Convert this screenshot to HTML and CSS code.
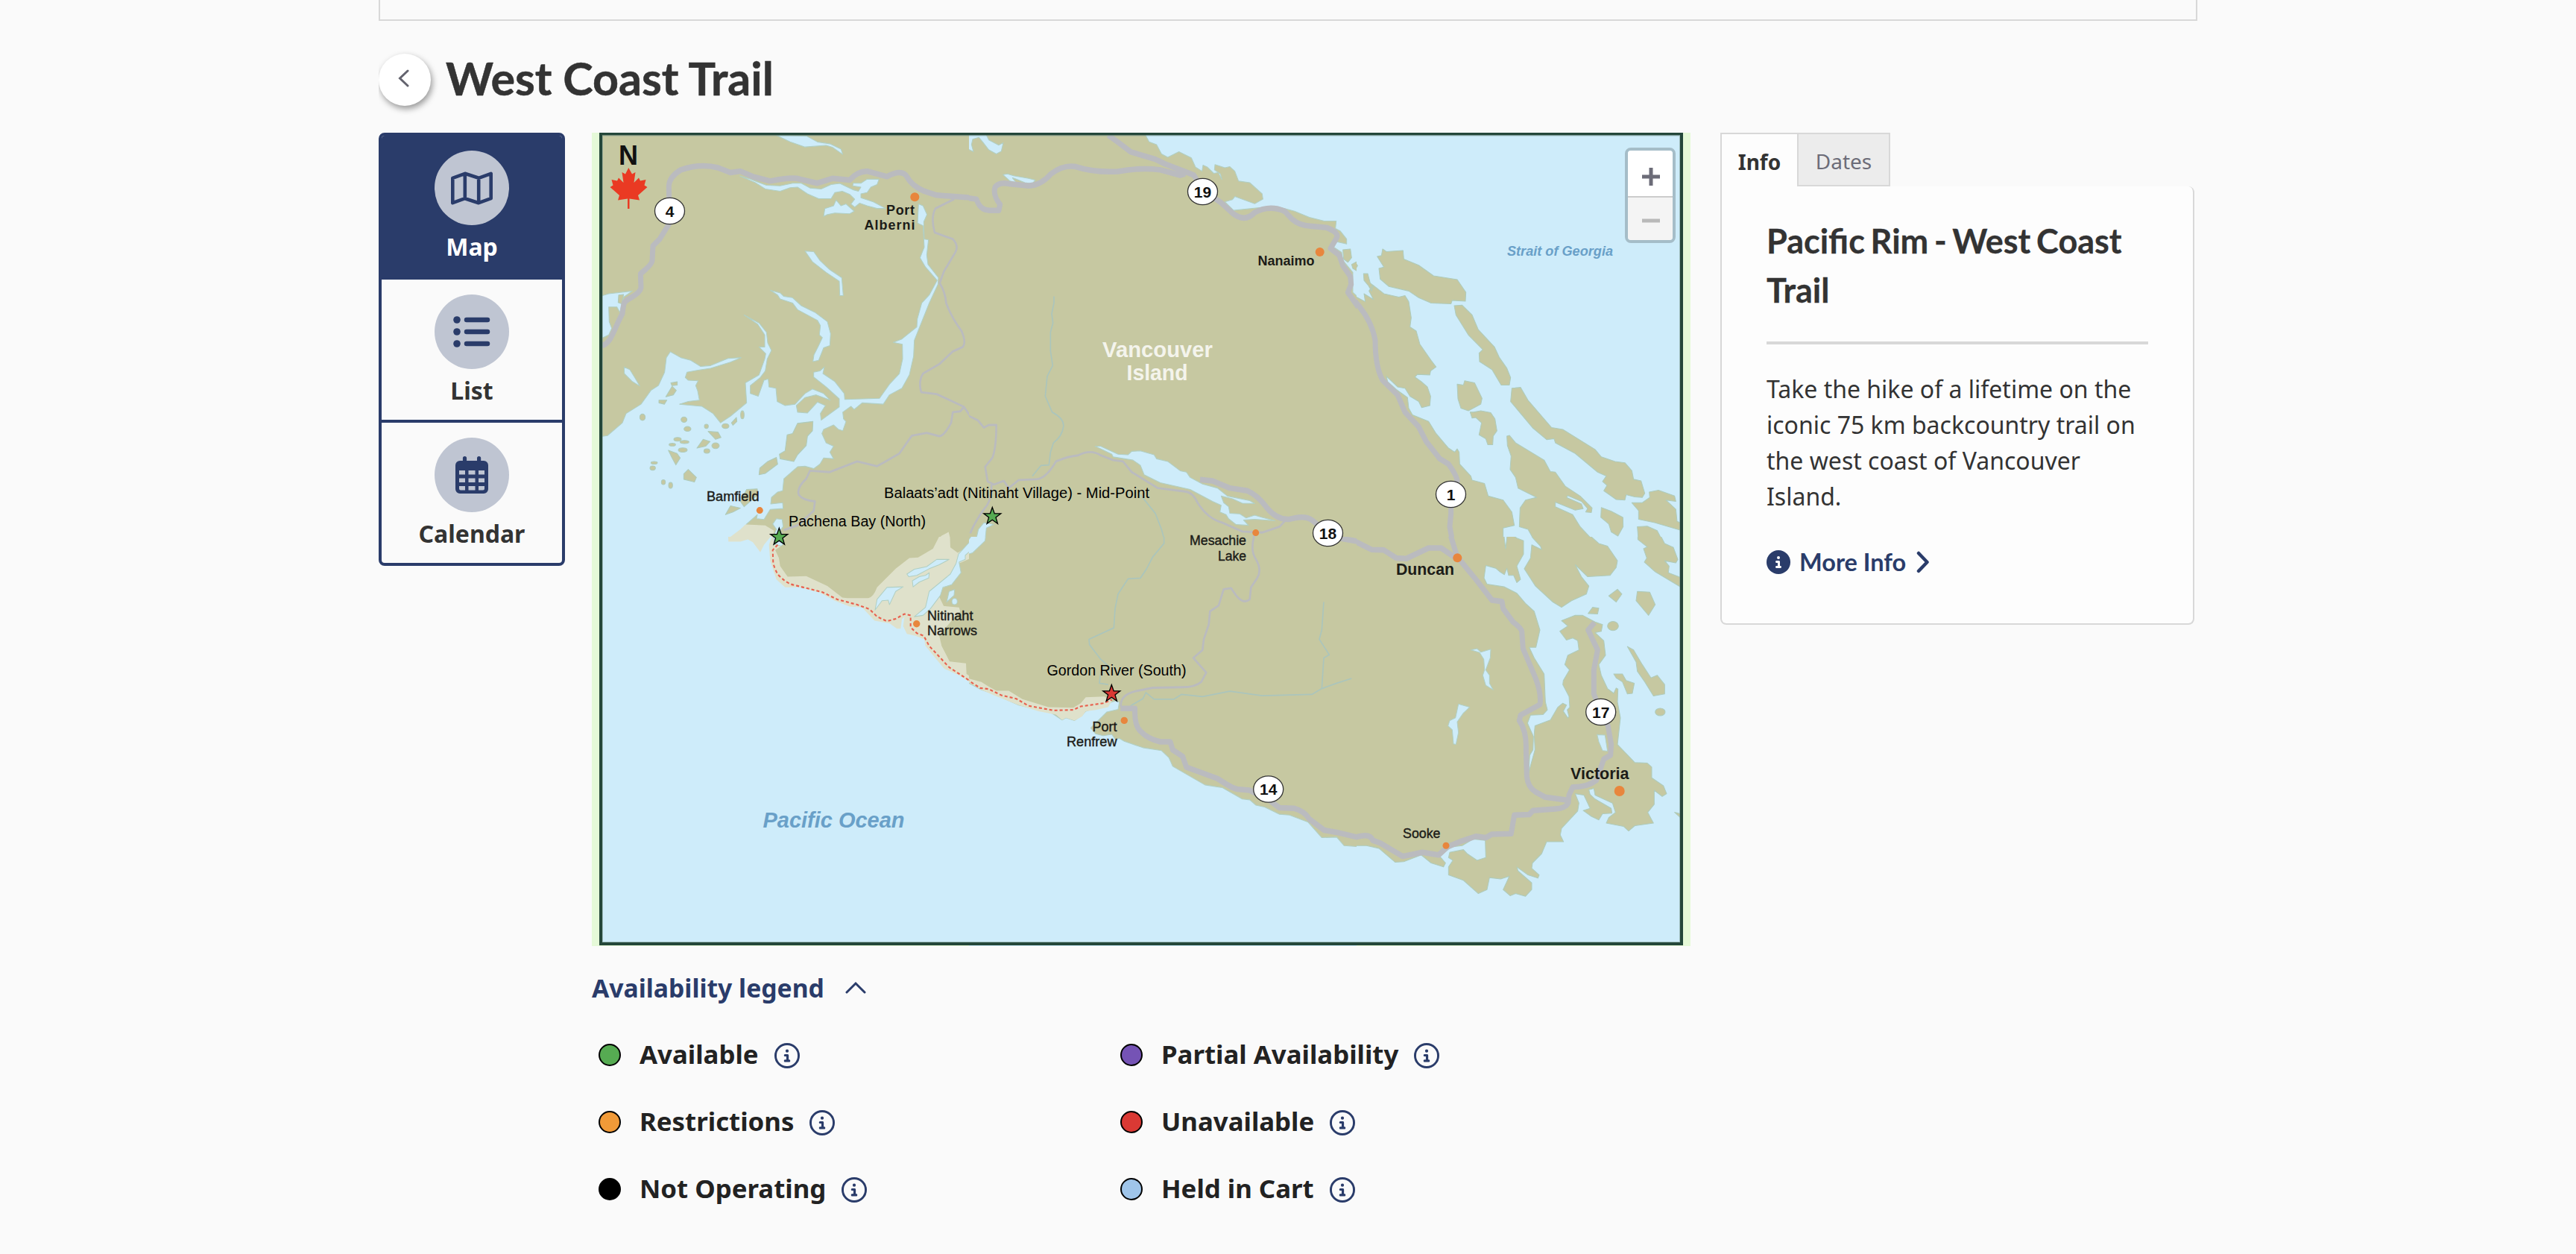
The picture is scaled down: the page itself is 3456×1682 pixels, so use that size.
FILE: index.html
```html
<!DOCTYPE html>
<html lang="en">
<head>
<meta charset="utf-8">
<title>West Coast Trail</title>
<link rel="stylesheet" href="styles.css">
</head>
<body>
<svg class="defs" width="0" height="0" aria-hidden="true">
  <symbol id="i-shape" viewBox="0 0 512 512"><path d="M216 336h24V272H216c-13.3 0-24-10.7-24-24s10.7-24 24-24h48c13.3 0 24 10.7 24 24v88h8c13.3 0 24 10.7 24 24s-10.7 24-24 24H216c-13.3 0-24-10.7-24-24s10.7-24 24-24zm40-208a32 32 0 1 1 0 64 32 32 0 1 1 0-64z"/></symbol>
  <symbol id="info-ring" viewBox="0 0 512 512"><circle cx="256" cy="256" r="234" fill="none" stroke="currentColor" stroke-width="44"/><use href="#i-shape" fill="currentColor"/></symbol>
  <symbol id="info-solid" viewBox="0 0 512 512"><circle cx="256" cy="256" r="256" fill="currentColor"/><use href="#i-shape" fill="#fff"/></symbol>
</svg>
<main class="page">
  <div class="filters"></div>
  <header class="title-bar">
    <button class="back" aria-label="Back"><svg width="15" height="24" viewBox="0 0 15 24"><path d="M13 2 2.5 12 13 22"/></svg></button>
    <h1>West Coast Trail</h1>
  </header>
  <div class="columns">
    <nav class="views">
      <a class="view active"><span class="disc"><svg width="56" height="45" viewBox="0 0 56 45"><path class="line" d="M2.3 8.8 18.8 2.8 37.2 8.8 53.7 2.8V36.2L37.2 42.2 18.8 36.2 2.3 42.2ZM18.8 2.8V36.2M37.2 8.8V42.2"/></svg></span><span class="label">Map</span></a>
      <a class="view"><span class="disc"><svg width="50" height="42" viewBox="0 0 50 42"><g fill="currentColor"><circle cx="5" cy="5" r="4.8"/><circle cx="5" cy="21" r="4.8"/><circle cx="5" cy="37" r="4.8"/></g><path class="line bars" d="M18 5H46M18 21H46M18 37H46"/></svg></span><span class="label">List</span></a>
      <a class="view"><span class="disc"><svg width="44" height="50" viewBox="0 0 44 50"><path fill="currentColor" fill-rule="evenodd" d="M12.5 0a2.6 2.6 0 0 1 2.6 2.6V6H29V2.6a2.6 2.6 0 0 1 5.2 0V6H38a6 6 0 0 1 6 6V44a6 6 0 0 1-6 6H6a6 6 0 0 1-6-6V12A6 6 0 0 1 6 6H9.9V2.6A2.6 2.6 0 0 1 12.500 0ZM5 19V24.500H13V19ZM17.500 19V24.500H26.500V19ZM31 19V24.500H39V19ZM5 29.500V35H13V29.500ZM17.500 29.500V35H26.500V29.500ZM31 29.500V35H39V29.500ZM5 40V43.500Q5 45.500 7 45.500H13V40ZM17.500 40V45.500H26.500V40ZM31 40V45.500H37Q39 45.500 39 43.500V40Z"/></svg></span><span class="label">Calendar</span></a>
    </nav>

    <section class="center">
      <div class="map">
        <svg class="map-art" width="1474" height="1091" viewBox="794 178 1474 1091">
          <rect x="794" y="178" width="1474" height="1091" fill="#e5f9d8"/>
          <rect x="804" y="178" width="1454" height="1090" fill="#ceecfa"/>

          <!-- north-west sheet -->
          <svg x="780" y="160" width="520" height="560" viewBox="0 0 1560 1568" preserveAspectRatio="none">
            <path class="land" d="M75 55H1600V1600H75Z"/>
            <path class="water" d="M785 60 840 85 900 104 985 98 1010 105 1052 132 1045 112 1000 92 950 85 905 62ZM638 213 680 225 745 248 800 250 850 240 885 240 920 258 965 262 1005 245 1040 241 1095 265 1115 270 1125 255 1092 250 1094 240 1125 240 1150 225 1198 225 1190 245 1165 255 1150 275 1125 280 1125 295 1175 310 1225 335 1190 335 1150 325 1120 315 1100 330 1085 318 1100 300 1080 282 1050 270 1020 275 1005 298 955 298 910 280 870 255 840 257 800 270 740 262 700 238ZM975 365 980 335 1015 325 1025 303 1045 325 1065 318 1098 345 1080 355 1020 352 990 358ZM900 495 935 497 960 530 1000 565 1048 595 1054 662 1040 662 1038 608 985 575 930 535ZM760 642 800 652 815 665 850 670 885 700 940 725 990 760 1003 805 1000 850 975 858 955 905 932 910 936 885 955 850 970 820 958 810 962 775 950 755 870 715 850 690 800 675 790 660ZM75 665 110 655 205 645 170 668 155 725 143 705 110 705 112 760 122 785 110 810 75 825ZM172 930 195 940 215 970 235 1002 205 985 173 955Z"/>
            <path class="water" d="M1357 318 1375 325 1391 358 1378 385 1380 450 1397 452 1390 510 1395 545 1437 595 1435 620 1400 690 1370 760 1340 830 1337 890 1320 960 1290 1010 1240 1035 1215 1070 1130 1065 1098 1090 1085 1078 1052 1100 1055 1125 1065 1135 1052 1170 1035 1165 1015 1148 975 1165 968 1180 985 1215 1015 1228 1000 1250 1015 1275 975 1272 960 1295 935 1312 900 1303 870 1305 815 1350 810 1395 790 1400 765 1420 762 1445 810 1440 812 1462 760 1465 735 1503 705 1500 708 1485 665 1520 650 1550 600 1580 75 1580 75 1192 105 1188 165 1140 180 1105 240 1070 280 1018 310 1000 335 950 342 895 358 873 400 895 440 905 480 928 520 925 590 898 643 895 600 912 520 935 470 942 425 950 418 970 430 980 470 982 460 1000 468 1020 475 1055 430 1060 395 1070 485 1078 530 1105 560 1140 600 1115 665 1065 660 990 715 960 738 900 742 880 715 855 738 855 738 810 710 770 655 735 715 765 745 800 750 840 765 868 748 900 740 945 720 970 680 1000 680 1030 712 1040 735 980 752 975 755 1005 783 1010 788 1060 820 1075 860 1070 900 1030 930 1013 975 1030 1002 1055 945 1035 900 1045 865 1075 870 1100 910 1103 950 1062 982 1075 962 1105 965 1130 1038 1080 1038 1050 985 1005 935 968 935 950 960 945 978 930 972 955 1020 985 1058 1030 1060 1052 1200 1048 1240 995 1280 955 1293 900 1292 845 1255 838 1290 825 1350 780 1352 750 1370 690 1400 660 1432 605 1385 555 1363 520 1380 480 1375 400 1353 390Z"/>
            <path class="park" d="M590 1575 640 1540 660 1522 740 1525 775 1545 770 1580ZM1430 1580 1450 1564 1478 1550 1486 1580Z"/>
            <path class="water" d="M770 1520 785 1500 808 1503 812 1530 800 1545 820 1575H770L785 1540Z"/>
            <path class="isle" d="M150 660 170 658 162 693 148 688ZM870 1142 932 1135 930 1170 910 1190 905 1225 870 1260 855 1285 800 1275 797 1258 820 1245 828 1185 850 1180ZM785 1270 790 1295 740 1330 715 1335 718 1310 750 1285ZM430 1315 463 1345 455 1362 412 1352 412 1332ZM350 1243 385 1255 398 1272 380 1298 365 1272ZM365 1003 382 1018 370 1035 340 1042ZM360 990 386 986 386 998 364 1000ZM312 1055 344 1055 334 1070 312 1065ZM465 1235 490 1202 518 1210 500 1228ZM510 1172 550 1175 562 1195 540 1202ZM604 1140 624 1120 626 1135 610 1149ZM580 1485 600 1452 640 1460 610 1475ZM665 1390 708 1388 710 1410 655 1455 640 1435Z"/>
            <g class="isle"><ellipse cx="246" cy="1119" rx="11" ry="12"/><ellipse cx="413" cy="1128" rx="12" ry="10"/><ellipse cx="427" cy="1163" rx="14" ry="9"/><ellipse cx="503" cy="1153" rx="8" ry="8"/><ellipse cx="387" cy="1202" rx="15" ry="7"/><ellipse cx="366" cy="1222" rx="13" ry="5"/><ellipse cx="415" cy="1212" rx="18" ry="6"/><ellipse cx="408" cy="1242" rx="18" ry="8"/><ellipse cx="540" cy="1226" rx="15" ry="11"/><ellipse cx="505" cy="1246" rx="12" ry="8"/><ellipse cx="580" cy="1152" rx="14" ry="9"/><ellipse cx="648" cy="1110" rx="7" ry="15"/><ellipse cx="293" cy="1290" rx="13" ry="5"/><ellipse cx="287" cy="1310" rx="11" ry="8"/><ellipse cx="330" cy="1363" rx="8" ry="9"/><ellipse cx="359" cy="1375" rx="8" ry="11"/></g>
            <path class="road minor" d="M1500 300 1425 335Q1405 370 1422 425L1495 450Q1520 475 1505 500L1460 570 1442 615Q1465 650 1468 690 1490 745 1530 795 1550 840 1535 855L1495 872 1440 920 1375 955Q1355 985 1368 1025L1430 1032 1540 1080 1565 1115M1540 1080 1525 1097 1495 1100 1488 1140Q1460 1190 1440 1190L1390 1178 1330 1188 1280 1255 1215 1290 1190 1303 1110 1285 1000 1325 920 1320 905 1350Q865 1385 875 1410 890 1430 940 1435L935 1470 870 1525 815 1543"/>
            <path class="road" d="M84 850C120 840 125 800 165 730 170 690 170 685 190 675Q240 650 240 630L238 580Q285 545 285 530L288 475 315 450 355 390 352 250Q355 215 400 190 480 165 550 182L600 200 640 195 690 215 760 232Q850 215 880 225L950 240 1010 222 1080 228Q1110 195 1150 195L1230 215Q1290 185 1310 215 1330 250 1380 270L1430 285 1570 295"/>
          </svg>

          <!-- north sheet -->
          <svg x="1300" y="160" width="520" height="560" viewBox="0 0 1560 1568" preserveAspectRatio="none">
            <path class="land" d="M-20 55H1600V1600H-20Z"/>
            <path class="water" d="M705 50 725 85 755 95 775 130 800 143 845 122 895 145 912 180 938 195 942 172 960 180 985 203 1003 200 1018 226 1012 205 988 190 990 170 1030 182 1050 178 1070 195 1085 232 1130 238 1180 280 1183 300 1150 317 1070 290 1060 302 1030 310 1065 342 1170 332 1240 328 1310 345 1370 368 1430 382 1478 382 1475 410 1495 420 1520 450 1520 468 1480 460 1468 480 1500 500 1505 530 1545 575 1545 650 1580 680V50ZM-20 50H65L80 78 120 97 138 88 130 120 110 130 80 115 55 85 40 68 15 75 10 95 18 122-20 105ZM137 208 155 205 180 212 240 222 267 228 255 242 225 238 190 225 175 220 190 238 165 232ZM508 1228 530 1228 600 1258 640 1260 655 1247 690 1245 745 1260 755 1275 800 1285 850 1320 875 1325 890 1345 940 1370 1000 1385 1040 1415 1130 1432 1150 1443 1100 1442 1060 1425 1015 1415 1025 1440 1045 1455 1050 1480 1090 1482 1115 1497 1150 1487 1180 1495 1232 1508 1190 1505 1150 1502 1105 1505 1125 1525 1075 1522 1045 1500 1035 1485 1010 1475 1015 1450 980 1435 890 1390 770 1365 705 1335 690 1300 660 1280 580 1268 575 1258ZM28 1580 38 1540 60 1515 100 1522 70 1535 65 1580Z"/>
            <path class="isle" d="M1505 490 1535 487 1540 520 1525 537 1508 525ZM1540 545 1580 525V580L1545 560Z"/>
            <path class="river" d="M342 665V690L333 730 338 765 328 800V870L337 925 315 965 307 1040 335 1100Q385 1125 380 1155 375 1190 340 1215L328 1250 322 1298 290 1300 255 1340M690 1410 750 1480 775 1540 785 1575"/>
            <path class="road minor" d="M-10 1110 35 1130 60 1158 80 1148 110 1148Q110 1230 95 1270L65 1305 75 1360 100 1372 140 1358 160 1385 200 1355 270 1352Q310 1350 350 1285 400 1265 440 1262 490 1238 530 1262L580 1280 620 1285 655 1325 760 1385 870 1398Q900 1400 920 1440 960 1500 1020 1515L1100 1548 1180 1552 1250 1530 1275 1505M90 1372Q95 1430 60 1465 25 1510 5 1555M1150 1552 1145 1575"/>
            <path class="road" d="M-10 295 30 300Q45 345 90 342L120 342 125 320Q95 285 105 255 120 235 160 242L240 250Q290 248 330 205 380 170 430 178 500 200 600 196 690 180 770 190L850 210 870 205M560 60Q600 85 650 122L750 150 790 168 880 200 905 210 945 270 1010 310 1060 352Q1110 390 1150 350 1210 320 1270 345L1300 375Q1330 400 1380 402L1440 407Q1490 425 1480 445L1455 485 1490 510 1505 550 1535 590 1538 620 1525 650 1570 710"/>
            <path class="road" d="M930 1353 980 1358 1050 1385 1120 1395Q1160 1410 1200 1460 1240 1505 1290 1502 1350 1485 1380 1505L1440 1550 1500 1575"/>
          </svg>

          <!-- north-east sheet -->
          <svg x="1820" y="160" width="460" height="560" viewBox="0 0 1380 1568" preserveAspectRatio="none">
            <path class="isle" d="M-20 668H0L35 685 30 655 68 677 50 645 65 622 110 655 170 668 195 662 210 685 220 745 215 780 240 795 255 845 300 905 320 930 298 945 295 960 245 958 235 968 260 985 285 1005 298 1040 295 1075 262 1083 250 1060 215 1040 195 1010 165 1005 120 965 125 985 160 1015 205 1045 210 1085 225 1110 290 1135 320 1180 370 1235 395 1250 405 1238 413 1250 415 1295 460 1340 465 1355 515 1368 530 1415 590 1430 625 1475 635 1525 590 1535V1590H-20ZM28 580 45 580 55 615 68 625 60 645 48 625 30 605ZM-10 530 4 550-10 570ZM105 487 120 497 187 493 190 525 250 548 310 588 405 602 440 650 438 683 385 680 380 693 300 690 250 670 210 645 130 628 95 600 90 560 110 555 83 515 100 512ZM393 700 425 698 465 735 490 790 555 855 575 895 605 935 620 970 615 998 582 998 545 940 495 910 493 878 508 865 450 810 400 735ZM405 995 430 998 435 982 475 990 505 1048 500 1070 450 1095 420 1085 408 1050ZM457 1100 470 1100 500 1095 540 1102 557 1125 565 1170 550 1190 548 1222 528 1222 520 1200 493 1185 503 1140 480 1120 465 1122ZM625 1010 660 1007 690 1055 785 1158 830 1165 960 1240 985 1268 1040 1285 1080 1290 1108 1320 1115 1352 1145 1358 1160 1405 1150 1420 1120 1418 1085 1410 1080 1430 1045 1428 995 1395 1008 1375 990 1360 1005 1340 970 1325 880 1255 800 1215 795 1200 765 1203 710 1160 620 1060ZM605 1190 615 1187 640 1215 755 1280 780 1323 800 1325 840 1378 900 1415 948 1460 945 1477 922 1475 930 1462 905 1435 850 1413 845 1420 905 1445 912 1462 880 1468 800 1438 800 1455 870 1485 900 1530 960 1590H720L690 1540 655 1530 658 1460 680 1430 725 1420 650 1385 640 1345 618 1315 622 1265 607 1225ZM985 1458 1025 1472 1072 1495 1073 1530 1052 1565 1025 1550 1015 1520 983 1495ZM1178 1400 1215 1393 1280 1415 1285 1435 1245 1430 1285 1465 1290 1510 1310 1518V1545L1200 1515 1135 1502 1135 1470 1108 1440 1150 1440 1180 1420ZM1130 1530 1170 1528 1210 1545 1235 1590H1135Z"/>
            <path class="road" d="M-10 680Q60 750 75 830 75 930 105 980L165 1035 195 1100 250 1155 280 1210 335 1275 370 1295Q405 1340 405 1360L380 1410V1480L375 1530 385 1580"/>
          </svg>

          <!-- south-west sheet -->
          <svg x="780" y="720" width="520" height="560" viewBox="0 0 1560 1568" preserveAspectRatio="none">
            <path class="park" d="M590-10 592 18 640 18 670 10 690 20 720 58 735 30 770-10ZM770-10 755 30 760 90 785 160 820 190 880 190 960 210 1020 240 1080 262 1130 265 1180 315 1240 325 1270 345 1285 345 1290 310 1300 300 1295 335 1310 365 1345 372 1380 385 1385 410 1460 495 1520 520 1570 550V-10Z"/>
            <path class="water" d="M770-10 778 28 805 35 820 20V-10Z"/>
            <path class="soil" d="M780 50 812 30 815-10H1445L1415 45 1355 78 1320 80 1265 120 1190 190Q1175 228 1155 230H1070L1050 228 990 185 905 148 830 150 800 110 795 80ZM1483-10H1580V20L1515 60 1485 40ZM1580 75 1520 100 1525 130 1490 175 1450 195 1440 225 1458 260 1520 265 1525 280 1495 310 1440 370 1450 410 1482 468 1548 475 1550 515 1580 535Z"/>
            <path class="water" d="M1580 5 1560 22 1518 65 1508 100 1485 140 1400 205 1385 265 1340 300 1375 295 1405 270 1445 220 1455 190 1490 180 1528 135 1520 95 1545 85 1545 70 1580 40ZM1310 140 1340 122 1390 112 1430 85 1480 85 1440 105 1400 120 1350 145 1318 150ZM1332 165 1360 150 1385 145 1400 135 1398 155 1360 170 1335 188ZM1182 275 1190 235 1230 190 1295 188 1265 205 1240 255 1235 238 1210 240ZM1470 245 1480 205 1502 198 1500 220Z"/>
            <ellipse class="water" cx="1502" cy="243" rx="11" ry="12"/>
            <path class="trail" d="M790 30 770 50 772 100Q785 140 800 150 830 178 860 182L970 208 1030 235 1110 255 1160 272 1190 300 1230 317 1265 308 1300 290 1325 295V340L1350 362 1378 372 1400 410 1480 490 1570 545"/>
          </svg>

          <!-- south sheet -->
          <svg x="1300" y="720" width="520" height="560" viewBox="0 0 1560 1568" preserveAspectRatio="none">
            <path class="land" d="M-20-20H1600V1600H-20Z"/>
            <path class="water" d="M-20 540 50 575 100 590 200 632 330 660 375 688 390 680 425 690 455 670 470 655 575 620 595 615 605 622 600 648 555 658 520 690 490 718 510 740 540 747 575 742 590 762 605 757 625 768 700 792 775 803 805 830 820 862 950 932 1020 942 1100 985 1130 988 1155 1008 1190 1015 1250 1042 1290 1045 1365 1072 1420 1130 1480 1128 1510 1160 1580 1165V1600H-20ZM-20 35 15-10H68L65 15 15 60-20 70Z"/>
            <path class="park" d="M-10 530 50 545 75 560 110 578 160 578 215 610 320 640 420 642 450 625 470 603 545 600 575 617 560 640 510 650 470 655 455 675 425 690 390 680 375 688 350 668 280 655 200 632 100 595 50 575-10 542Z"/>
            <path class="river" d="M785-10V25L740 75 715 120 690 155 640 158 600 215 588 270 583 342 483 385 485 405 530 460 555 480 530 510 525 550 560 555M650 635 700 608 712 585 745 610 825 610 855 592 940 600 1050 580 1180 597 1380 592 1420 570 1480 550 1540 532M1428 245 1420 350 1410 385 1450 443 1428 455 1420 570"/>
            <path class="road minor" d="M1150-10Q1130 50 1155 85 1180 125 1160 155L1135 190 1130 235Q1105 255 1075 220L1055 193 1025 197 1005 258 970 280 965 330 945 385 940 425 903 455 955 510 935 545Q910 565 860 565L740 567 670 580Q605 595 612 640"/>
            <path class="road" d="M610 645H668Q665 710 690 730 720 760 770 770H810L820 800 860 825 875 865 1000 908Q1060 945 1080 948L1130 952 1210 990 1250 1018 1310 1020Q1350 1030 1370 1060L1430 1102 1480 1110 1570 1130M1490 5 1570 18"/>
            <path class="trail" d="M-10 535 45 568 80 572 130 595 190 608 240 635 340 652 420 650 450 637 540 625 575 612"/>
          </svg>

          <!-- south-east sheet -->
          <svg x="1820" y="720" width="460" height="560" viewBox="0 0 1380 1568" preserveAspectRatio="none">
            <path class="isle" d="M-20-20H592L595 10 600 45 608-20 645 5 672 15 672 65 645 110 660 160 645 172 632 145 612 145 605 118 595 142 575 130 560 118 520 108 513 155 525 178 595 188 645 212 680 250 715 280 738 350 722 415 695 415 715 455 755 515 760 620 768 650 750 668 700 670 688 700 712 750 710 800 697 820 692 890 700 860 718 800 715 740 718 710 780 688 810 640 830 625 845 632 832 655 850 680 855 675 848 650 858 640 855 600 830 555 832 540 857 500 838 480 850 445 895 425 890 390 870 380 845 388 818 355 850 335 825 315 880 295 910 295 960 320 990 330 985 355 960 360 995 390 1002 445 975 480 985 520 1010 570 1035 588 1045 568 1052 572 1050 620 1062 680 1050 780 1120 848 1170 850 1188 865 1188 905 1235 935 1248 965 1230 975 1198 952 1198 1005 1172 1035 1195 1075 1120 1085 1095 1105 1075 1088 1005 1075 1015 1055 1042 1035 1030 1000 960 970 955 945 935 950 940 968 960 985 1025 1020 1028 1038 990 1040 975 1063 945 1050 912 1028 940 1020 915 970 880 965 895 1000 890 1030 825 1095 820 1120 833 1145 765 1145 745 1190 708 1225 705 1245 735 1270 730 1282 690 1270 645 1240 650 1255 705 1300 705 1325 680 1350 640 1340 618 1348 590 1325 615 1275 580 1285 535 1280 525 1325 490 1340 430 1290 370 1270 370 1240 388 1215 370 1205 375 1185 430 1175 445 1190 485 1215 520 1205 518 1140 470 1135 425 1160 380 1165 335 1200 358 1225 350 1240 300 1225 260 1195 190 1220 155 1222 90 1170 40 1160H-20ZM690-20H925L945 0 975 25 1010 35 1050 90 1045 115 1020 145 930 150 880 105 905 150 935 185 925 215 865 240 825 265 790 245 720 185 675 120 700 80 705 30 745 48 740 35 710 5ZM1132-20H1215L1240 25 1275 40 1293 85 1285 98 1240 90 1258 110 1255 135 1310 155V192L1200 130 1158 95 1168 80 1155 45 1170 38 1132 10ZM1015 222 1050 197 1068 215 1045 245ZM1130 205 1180 208 1202 255 1175 295 1125 240ZM932 288 950 265 975 268 970 290ZM1090 412 1115 425 1150 480 1185 530 1210 520 1240 555V590L1195 598 1160 545 1130 505 1125 470ZM1035 515H1070L1085 540 1118 550 1110 588 1090 590 1070 545 1045 530ZM1280 1035 1310 1042V1060Z"/>
            <g class="isle"><ellipse cx="1032" cy="335" rx="22" ry="17"/><ellipse cx="1222" cy="658" rx="20" ry="14"/></g>
            <path class="water" d="M460 425 485 420 500 433 540 422 538 455 520 500 535 520 535 550 550 575 520 558 508 520 515 500 512 460 495 435ZM410 628 455 640 430 662 405 695 410 735 400 780 390 778 385 725 368 710 375 690 398 680ZM968 743 1000 745 1010 805 990 803 975 770Z"/>
            <path class="road" d="M-10 15 60 48 110 50 160 80 200 82 290 42 340 42 400 80M375-15 405 75 480 160 545 238 585 243 590 270 630 320Q665 345 665 355L670 420 720 530Q745 590 738 630L660 670 655 690Q685 730 682 800L685 900Q690 940 720 958L760 978 855 990M958 322 932 350 970 425 955 500V590L985 660 1012 710 1025 780 1022 820 995 835 965 915Q930 940 870 940L855 970 852 1000Q840 1020 800 1022L710 1028 695 1043 635 1045 622 1115 545 1117 520 1130 480 1125 425 1142 365 1165 330 1195 265 1185 185 1200 95 1150 65 1140Q55 1110 -10 1130"/>
          </svg>

          <path fill="#24473a" fill-rule="evenodd" d="M804 178H2258V1268H804ZM808 181.500V1264H2254V181.500Z"/>
          <rect x="808.500" y="182" width="1445" height="1081.500" fill="none" stroke="#7f9c92" stroke-opacity=".6"/>

          <g class="town-dots">
            <circle cx="1227.300" cy="264.300" r="6"/><circle cx="1770.700" cy="337.900" r="6"/><circle cx="1019.300" cy="684.600" r="4.500"/><circle cx="1684.700" cy="714.600" r="4.500"/><circle cx="1229.700" cy="836.800" r="4.700"/><circle cx="1508.300" cy="966.400" r="4.700"/><circle cx="1955.300" cy="748.200" r="6"/><circle cx="2172.700" cy="1061" r="7"/><circle cx="1940" cy="1134.300" r="4.500"/>
          </g>
          <g class="shields">
            <g><ellipse cx="898.500" cy="283" rx="20" ry="17.700"/><ellipse cx="1613.500" cy="257" rx="20" ry="17.700"/><ellipse cx="1781.500" cy="715" rx="20" ry="17.700"/><ellipse cx="1946.500" cy="663" rx="20" ry="17.700"/><ellipse cx="1701.700" cy="1058.500" rx="20" ry="17.700"/><ellipse cx="2147.700" cy="955" rx="20" ry="17.700"/></g>
            <text x="898.500" y="290.500">4</text><text x="1613.500" y="264.500">19</text><text x="1781.500" y="722.500">18</text><text x="1946.500" y="670.500">1</text><text x="1701.700" y="1066">14</text><text x="2147.700" y="962.500">17</text>
          </g>
          <text class="north" x="830" y="221" textLength="26" lengthAdjust="spacingAndGlyphs">N</text>
          <path fill="#ea3a23" d="M843.300 225 848 233.500 852.500 231 850.500 245 857 238.500 859 242.500 866.500 241 864.500 248.500 868.500 251 856 262 858 268.500 844.500 266.500V280H842V266.500L829 268.500 831 262 818.500 251 822.500 248.500 820.500 241 828 242.500 830 238.500 836.500 245 834.500 231 839 233.500Z"/>
          <g class="town bold">
            <text x="1189" y="288.300" textLength="38">Port</text><text x="1159.500" y="308" textLength="68">Alberni</text><text x="1687.500" y="355.500" textLength="76">Nanaimo</text>
          </g>
          <g class="town city"><text x="1873" y="771.300" textLength="78" lengthAdjust="spacingAndGlyphs">Duncan</text><text x="2107" y="1045" textLength="78.500" lengthAdjust="spacingAndGlyphs">Victoria</text></g>
          <g class="town">
            <text x="948" y="671.500" textLength="70.500" lengthAdjust="spacingAndGlyphs">Bamfield</text><text x="1596" y="731" textLength="76" lengthAdjust="spacingAndGlyphs">Mesachie</text><text x="1634" y="751.500" textLength="38" lengthAdjust="spacingAndGlyphs">Lake</text><text x="1244" y="832.200" textLength="61.500" lengthAdjust="spacingAndGlyphs">Nitinaht</text><text x="1244" y="852" textLength="67" lengthAdjust="spacingAndGlyphs">Narrows</text><text x="1465.500" y="980.500" textLength="33" lengthAdjust="spacingAndGlyphs">Port</text><text x="1431" y="1000.700" textLength="67.500" lengthAdjust="spacingAndGlyphs">Renfrew</text><text x="1882" y="1124" textLength="50.500" lengthAdjust="spacingAndGlyphs">Sooke</text>
          </g>
          <g class="region"><text x="1479" y="478.500" textLength="148" lengthAdjust="spacingAndGlyphs">Vancouver</text><text x="1511.500" y="510" textLength="82" lengthAdjust="spacingAndGlyphs">Island</text></g>
          <text class="sea small" x="2022" y="343" textLength="142" lengthAdjust="spacingAndGlyphs">Strait of Georgia</text>
          <text class="sea" x="1023.500" y="1110" textLength="190" lengthAdjust="spacingAndGlyphs">Pacific Ocean</text>
          <g class="site">
            <text x="1058" y="705.500" textLength="184" lengthAdjust="spacingAndGlyphs">Pachena Bay (North)</text><text x="1186" y="667.800" textLength="356" lengthAdjust="spacingAndGlyphs">Balaats’adt (Nitinaht Village) - Mid-Point</text><text x="1404.500" y="906" textLength="187" lengthAdjust="spacingAndGlyphs">Gordon River (South)</text>
          </g>
          <g class="stars">
            <path fill="#56ab52" transform="translate(1045.300 720.300)" d="M0-12 2.900-3.700 11.500-3.700 4.700 1.400 7.200 9.800 0 4.800-7.200 9.800-4.700 1.400-11.500-3.700-2.900-3.700Z"/>
            <path fill="#56ab52" transform="translate(1331.300 692.500)" d="M0-12 2.900-3.700 11.500-3.700 4.700 1.400 7.200 9.800 0 4.800-7.200 9.800-4.700 1.400-11.500-3.700-2.900-3.700Z"/>
            <path fill="#da3934" transform="translate(1491.300 930.500)" d="M0-12 2.900-3.700 11.500-3.700 4.700 1.400 7.200 9.800 0 4.800-7.200 9.800-4.700 1.400-11.500-3.700-2.900-3.700Z"/>
          </g>
        </svg>
        <div class="zoom">
          <button class="zoom-in" aria-label="Zoom in"><svg width="26" height="26" viewBox="0 0 26 26"><path d="M13 1V25M1 13H25"/></svg></button>
          <button class="zoom-out" aria-label="Zoom out"><svg width="26" height="26" viewBox="0 0 26 26"><path d="M1 13H25"/></svg></button>
        </div>
      </div>
      <h2 class="legend-title"><span>Availability legend</span><svg width="28" height="17" viewBox="0 0 28 17"><path d="M2 15 14 3 26 15"/></svg></h2>
      <ul class="legend">
        <li><i class="dot available"></i><span>Available</span><svg class="info"><use href="#info-ring"/></svg></li>
        <li><i class="dot partial"></i><span>Partial Availability</span><svg class="info"><use href="#info-ring"/></svg></li>
        <li><i class="dot restricted"></i><span>Restrictions</span><svg class="info"><use href="#info-ring"/></svg></li>
        <li><i class="dot unavailable"></i><span>Unavailable</span><svg class="info"><use href="#info-ring"/></svg></li>
        <li><i class="dot closed"></i><span>Not Operating</span><svg class="info"><use href="#info-ring"/></svg></li>
        <li><i class="dot held"></i><span>Held in Cart</span><svg class="info"><use href="#info-ring"/></svg></li>
      </ul>
    </section>

    <aside class="details">
      <div class="tabs"><span class="tab current">Info</span><span class="tab">Dates</span></div>
      <div class="panel">
        <h2>Pacific Rim - West Coast Trail</h2>
        <hr>
        <p>Take the hike of a lifetime on the iconic 75 km backcountry trail on the west coast of Vancouver Island.</p>
        <a class="more"><svg width="32" height="32"><use href="#info-solid"/></svg><span>More Info</span><svg class="chev" width="18" height="30" viewBox="0 0 18 30"><path d="M3 3 14.500 15 3 27"/></svg></a>
      </div>
    </aside>
  </div>
</main>
</body>
</html>
```

FILE: styles.css
```css
* { box-sizing: border-box; }
body { margin: 0; background: #fafafa; color: #333; font-family: "Noto Sans", sans-serif; }
h1, h2, p, ul { margin: 0; padding: 0; }
button { padding: 0; border: 0; font: inherit; }
.defs { position: absolute; }
.page { width: 2440px; margin-left: 508px; height: 1682px; overflow: hidden; }

.filters { height: 28px; border: 2px solid #d8d8d8; border-top: 0; }

.title-bar { display: flex; align-items: center; gap: 20px; height: 150px; padding-top: 8px; margin-left: -10px; padding-left: 10px; }
.title-bar h1 { font: 700 61px/72px Lato, sans-serif; padding-bottom: 4px; -webkit-text-stroke: .5px #333; }
.back { display: flex; align-items: center; justify-content: center; width: 70px; height: 70px; border-radius: 50%; background: #fff; box-shadow: 2px 4px 8px rgba(0,0,0,.4); }
.back svg { fill: none; stroke: #63636e; stroke-width: 3; stroke-linecap: round; margin: -4px 3px 0 0; }

.columns { display: grid; grid-template-columns: 250px 1550px 636px; align-items: start; }
.center { margin-left: 36px; width: 1474px; }

.views { border: 4px solid #2a3c6a; border-radius: 8px; overflow: hidden; height: 581px; }
.view { display: flex; flex-direction: column; align-items: center; height: 192px; padding-top: 20px; border-top: 4px solid #2a3c6a; color: #333; }
.view.active { height: 193px; border-top: 0; background: #2a3c6a; color: #fff; }
.view.active + .view { height: 188px; border-top: 0; }
.disc { display: flex; align-items: center; justify-content: center; width: 100px; height: 100px; border-radius: 50%; background: #bfc5d2; color: #2a3c6a; }
.line { fill: none; stroke: currentColor; stroke-width: 4.6; stroke-linejoin: round; }
.bars { stroke-width: 6.500; stroke-linecap: round; }
.label { font-size: 32px; font-weight: 700; line-height: 44px; margin-top: 7px; }

.map { position: relative; height: 1091px; }
.map-art { display: block; font-family: "Liberation Sans", sans-serif; }
.land, .soil { fill: #c6c8a1; }
.isle { fill: #c6c8a1; stroke: #aecbbb; stroke-width: 3; stroke-linejoin: round; }
.park { fill: #dfe1cb; }
.water { fill: #ceecfa; stroke: #b1cfc3; stroke-width: 3; stroke-linejoin: round; }
.river { fill: none; stroke: #abc5bc; stroke-width: 5; stroke-linejoin: round; }
.road { fill: none; stroke: #babbbf; stroke-width: 21; stroke-linejoin: round; }
.road.minor { stroke-width: 8; }
.trail { fill: none; stroke: #e8604e; stroke-width: 6; stroke-dasharray: 12 9; }
.town-dots { fill: #e8863d; }
.shields ellipse { fill: #fff; stroke: #333; stroke-width: 1.3; }
.shields text { font-size: 21px; font-weight: 700; text-anchor: middle; fill: #111; }
.north { font-size: 37px; font-weight: 700; fill: #111; }
.town text { font-size: 18px; fill: #1c1c18; stroke: #1c1c18; stroke-width: .4; }
.town.bold text { font-weight: 700; stroke: none; }
.town.city text { font-weight: 700; font-size: 22px; stroke: none; }
.region text { font-size: 29.5px; font-weight: 700; fill: #f4f4ec; }
.sea { font-size: 30px; font-weight: 700; font-style: italic; fill: #69a0c8; }
.sea.small { font-size: 19px; }
.site text { font-size: 20px; fill: #000; }
.stars path { stroke: #000; stroke-width: 1.300; }

.zoom { position: absolute; top: 20px; right: 20px; width: 68px; height: 128px; border: 4px solid #a5bdc8; border-radius: 8px; overflow: hidden; display: flex; flex-direction: column; }
.zoom button { flex: 1; display: flex; align-items: center; justify-content: center; padding-left: 2px; }
.zoom path { fill: none; stroke-width: 5; }
.zoom-in { background: #fff; stroke: #6c6c78; border-bottom: 2px solid #ccc; padding-top: 8px; }
.zoom-out { background: #f4f4f4; stroke: #b9b9b9; padding-top: 4px; }

.legend-title { display: flex; align-items: center; gap: 28px; margin-top: 32px; height: 48px; font-size: 33.7px; color: #2a3c6a; }
.legend-title svg { fill: none; stroke: #2a3c6a; stroke-width: 3; stroke-linecap: round; margin-top: -2px; }
.legend { list-style: none; display: grid; grid-template-columns: 700px 1fr; grid-auto-rows: 90px; margin-top: 21px; padding-left: 9px; }
.legend li { display: flex; align-items: center; font-size: 34.8px; line-height: 48px; font-weight: 700; color: #222; }
.legend span { margin-top: -3px; }
.dot { width: 30px; height: 30px; border: 2px solid #000; border-radius: 50%; margin-right: 25px; }
.info { width: 34px; height: 34px; margin: 2px 0 0 21px; color: #2a3c6a; }
.available { background: #56ab52; }
.partial { background: #7553b5; }
.restricted { background: #f19a38; }
.unavailable { background: #da3934; }
.closed { background: #000; }
.held { background: #9fc5ea; }

.tabs { display: flex; height: 72px; }
.tab { display: flex; align-items: center; justify-content: center; width: 125px; border: 2px solid #d8d8d8; background: #ececec; color: #6c6c78; font-size: 28px; padding-top: 3px; }
.tab.current { width: 103px; background: #fdfdfd; color: #333; font-weight: 700; border-right: 0; border-bottom: 0; }
.panel { height: 588px; border: 2px solid #d8d8d8; border-top: 0; border-radius: 0 8px 8px 8px; background: #fdfdfd; padding: 40px 60px 0; }
.panel h2 { font: 700 45px/66px Lato, sans-serif; word-spacing: -3.2px; -webkit-text-stroke: .3px #333; }
.panel hr { height: 4px; border: 0; margin: 36px 0 0; background: #d8d8d8; }
.panel p { font-size: 32px; line-height: 48px; margin-top: 36px; }
.more { display: flex; align-items: center; margin-top: 44px; height: 40px; color: #2a3c6a; font: 700 32.500px/40px Lato, sans-serif; }
.more span { margin: 0 14px 0 12px; }
.chev { fill: none; stroke: #2a3c6a; stroke-width: 4.500; stroke-linecap: round; stroke-linejoin: round; }
```
